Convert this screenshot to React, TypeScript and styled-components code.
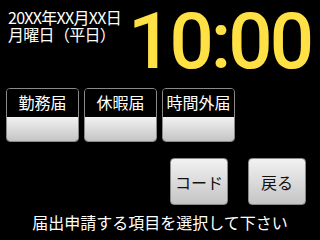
import React from 'react';
import styled, { createGlobalStyle } from 'styled-components';

const GlobalStyle = createGlobalStyle`
    html, body {
        margin: 0;
        padding: 0;
        background: #000;
    }
    body {
        font-family: "Noto Sans CJK JP", "DejaVu Sans", sans-serif;
    }
`;

const Screen = styled.div`
    width: 320px;
    height: 240px;
    background: #000;
    color: #fff;
    display: flex;
    flex-direction: column;
    overflow: hidden;
`;

const Header = styled.div`
    display: flex;
    flex-direction: row;
    justify-content: space-between;
    align-items: flex-start;
`;

const DateBlock = styled.div`
    padding: 9px 0 0 8px;
    font-size: 16px;
    line-height: 17px;
    letter-spacing: -0.7px;
    white-space: nowrap;
`;

const Clock = styled.div`
    font-family: Roboto, "Liberation Sans", sans-serif;
    font-weight: 500;
    font-size: 78px;
    line-height: 84px;
    color: #ffe045;
    letter-spacing: -3px;
    margin-right: 9px;
`;

const FormRow = styled.div`
    display: flex;
    flex-direction: row;
    gap: 5px;
    padding-left: 6px;
    margin-top: 4px;
`;

const FormButton = styled.div`
    width: 73px;
    height: 54px;
    box-sizing: border-box;
    border: 1px solid #8a8a8a;
    border-radius: 4px;
    display: flex;
    flex-direction: column;
    overflow: hidden;
`;

const FormLabel = styled.div`
    height: 28px;
    background: #000;
    color: #fff;
    font-size: 16px;
    line-height: 27px;
    text-align: center;
`;

const FormFace = styled.div`
    flex: 1;
    background: linear-gradient(#f2f2f2, #c4c4c4);
`;

const ActionRow = styled.div`
    display: flex;
    flex-direction: row;
    justify-content: flex-end;
    gap: 20px;
    padding-right: 14px;
    margin-top: 16px;
`;

const ActionButton = styled.div`
    width: 58px;
    height: 47px;
    box-sizing: border-box;
    border: 1px solid #8a8a8a;
    border-radius: 4px;
    background: linear-gradient(#f2f2f2, #c4c4c4);
    color: #111;
    font-size: 16px;
    display: flex;
    align-items: center;
    justify-content: center;
`;

const Guide = styled.div`
    text-align: center;
    font-size: 16px;
    line-height: 18px;
    margin-top: 8px;
`;

const forms = ['勤務届', '休暇届', '時間外届'];

const App: React.FC = () => {
    return (
        <>
            <GlobalStyle />
            <Screen>
                <Header>
                    <DateBlock>
                        20XX年XX月XX日
                        <br />
                        月曜日（平日）
                    </DateBlock>
                    <Clock>10:00</Clock>
                </Header>
                <FormRow>
                    {forms.map((f) => (
                        <FormButton key={f}>
                            <FormLabel>{f}</FormLabel>
                            <FormFace />
                        </FormButton>
                    ))}
                </FormRow>
                <ActionRow>
                    <ActionButton>コード</ActionButton>
                    <ActionButton>戻る</ActionButton>
                </ActionRow>
                <Guide>届出申請する項目を選択して下さい</Guide>
            </Screen>
        </>
    );
};

export default App;
